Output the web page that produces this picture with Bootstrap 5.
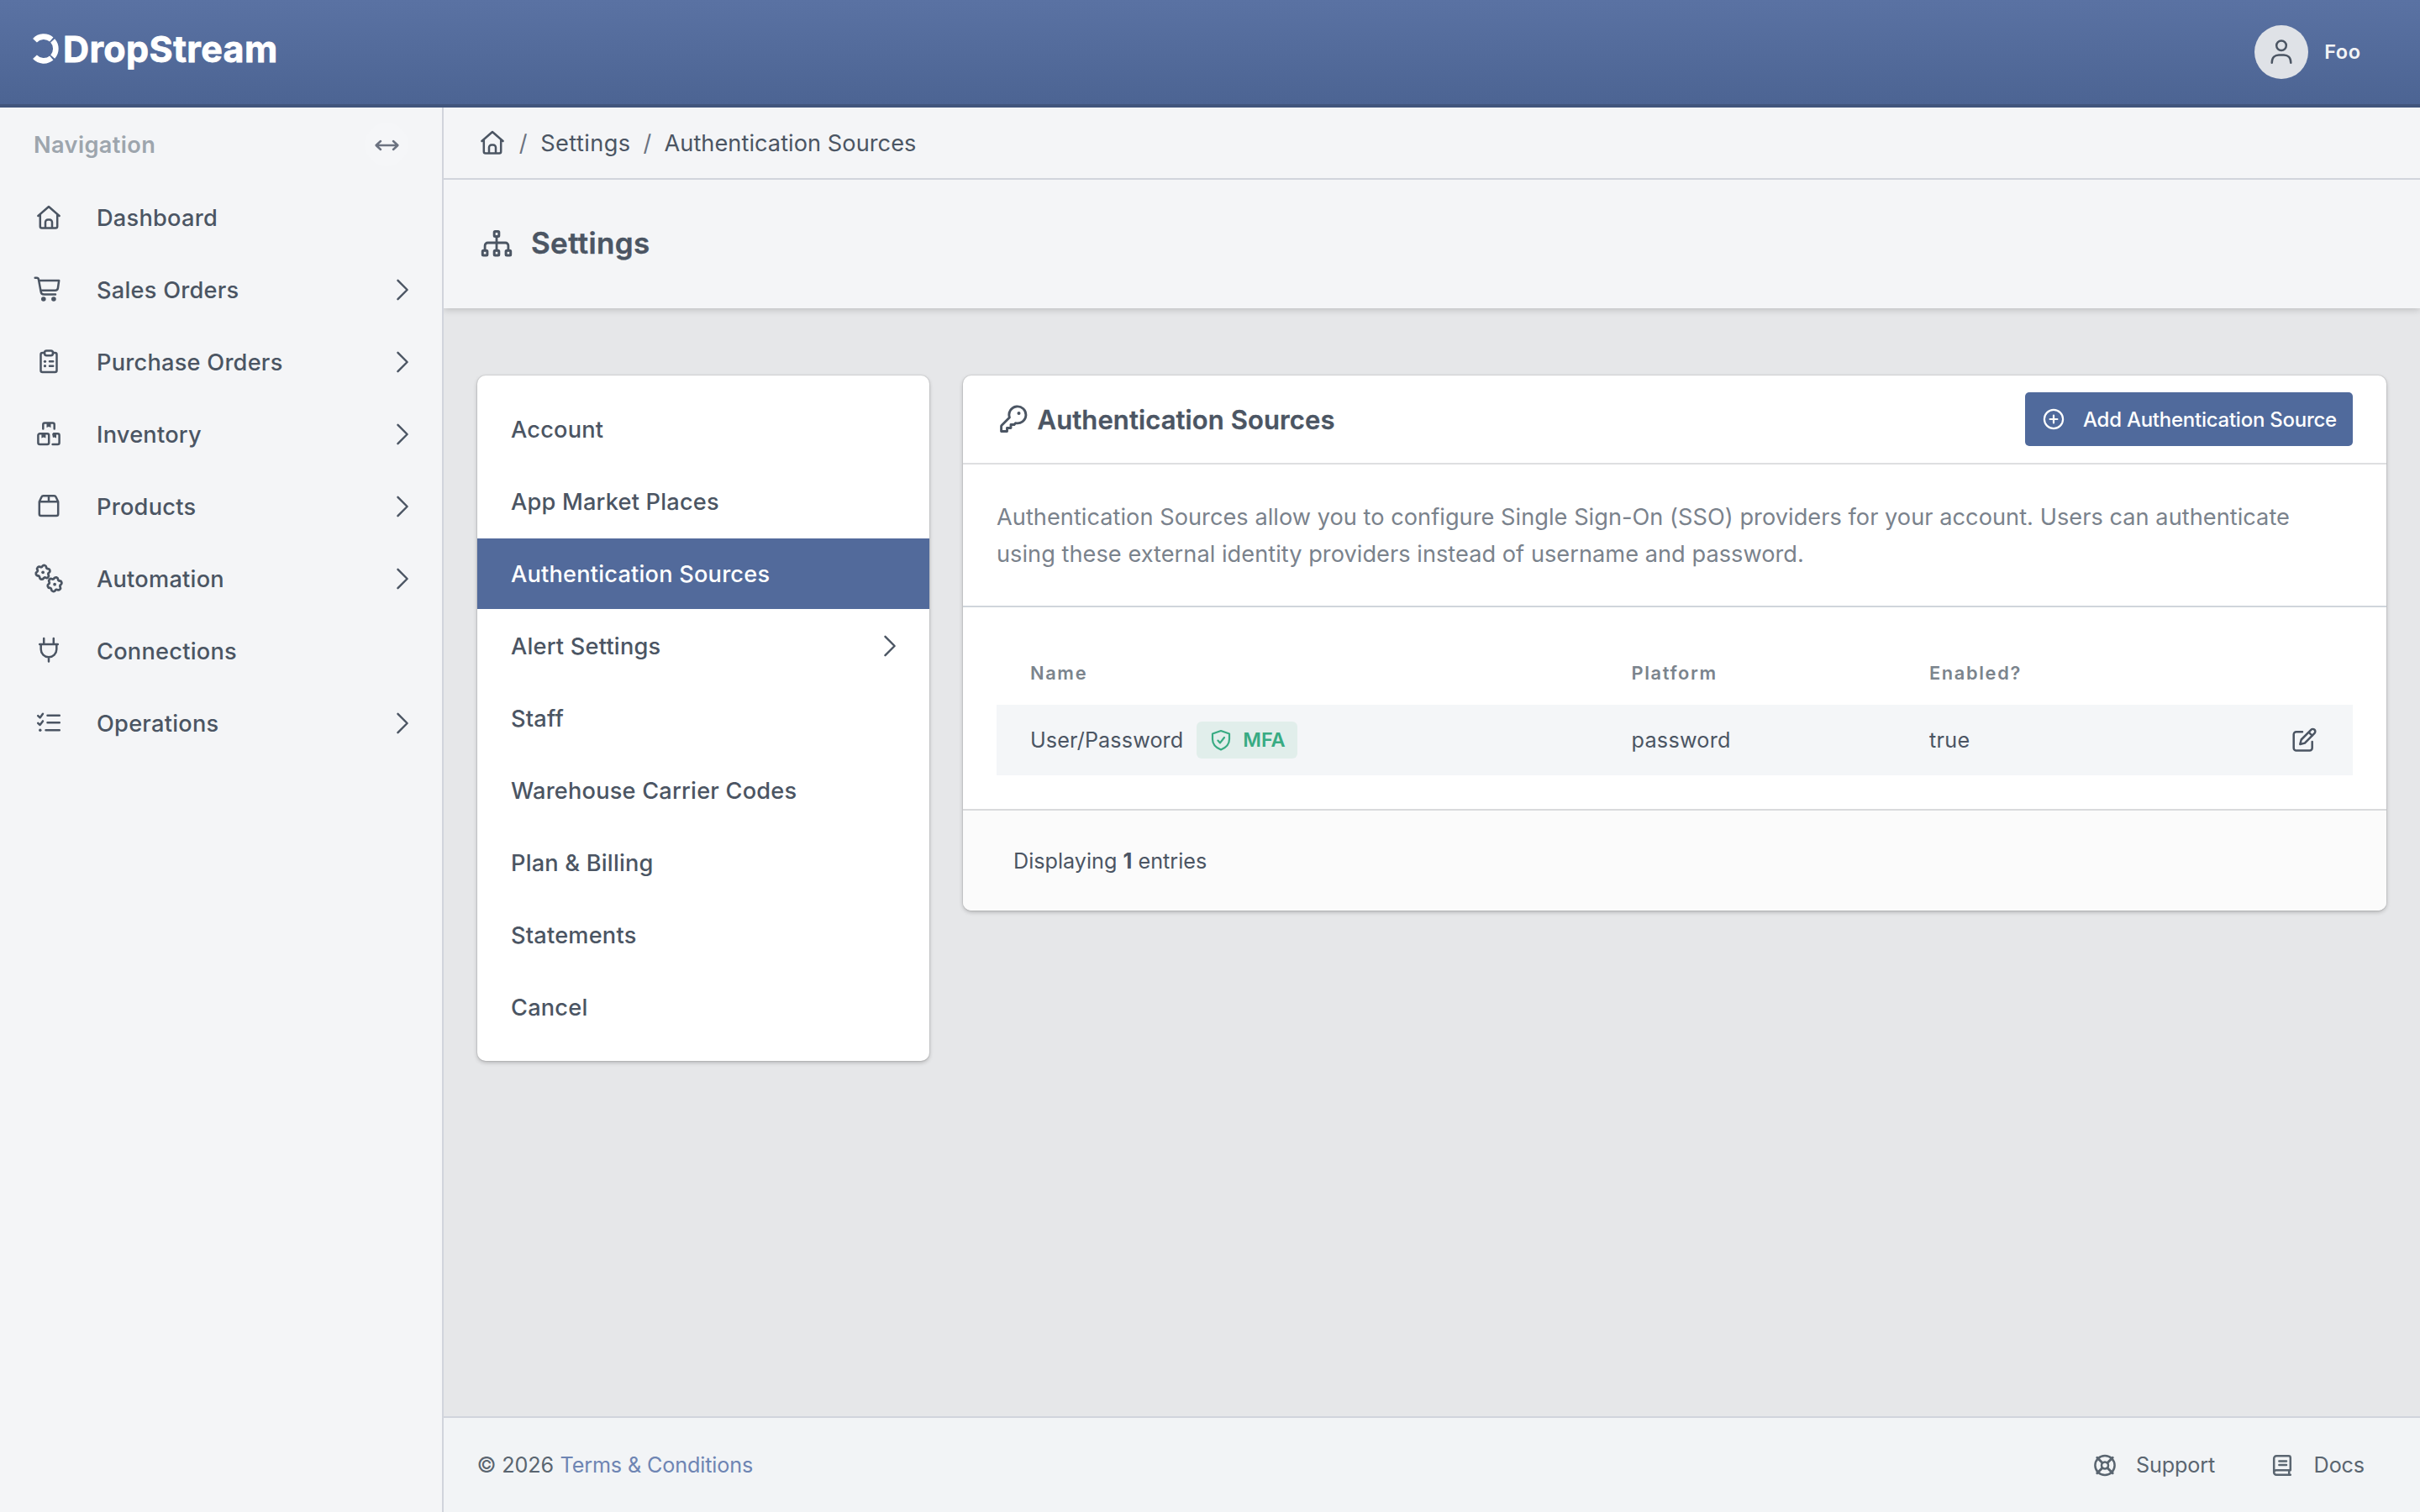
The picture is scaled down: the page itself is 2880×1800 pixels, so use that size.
<!DOCTYPE html>
<html lang="en">
<head>
<meta charset="utf-8">
<meta name="viewport" content="width=device-width, initial-scale=1">
<title>Authentication Sources - DropStream</title>
<link href="https://cdn.jsdelivr.net/npm/bootstrap@5.3.0/dist/css/bootstrap.min.css" rel="stylesheet">
<style>
  :root { --ink:#4b5563; --brand:#526a9b; --line:#d1d4dc; --pane:#f4f5f7; }
  body { font-family:Inter,"Noto Sans",sans-serif; font-size:27.2px; line-height:44px; color:var(--ink); background:#e6e7e9; height:1800px; overflow:hidden; }
  a { color:inherit; text-decoration:none; }
  .ico { width:40px; height:40px; flex:none; fill:none; stroke:currentColor; stroke-width:2.5; stroke-linecap:round; stroke-linejoin:round; display:block; overflow:visible; }
  .ico .solid { fill:currentColor; stroke:none; }
  .topbar { height:128px; border-bottom:4px solid #41557c; background:linear-gradient(#5a72a3,#4c6493); padding:0 69px 0 33px; }
  .brand { color:#fff; font-weight:700; font-size:43px; letter-spacing:.4px; line-height:50px; margin-top:-8px; }
  .brand span { -webkit-text-stroke:.8px #fff; }
  .brand .ico { stroke-width:6.6; stroke-linecap:butt; margin-right:2px; }
  .avatar { width:64px; height:64px; background:#dfe2e7; color:#4b5563; margin-right:19px; }
  .uname { color:#f3f4f6; font-size:23.5px; font-weight:600; letter-spacing:.55px; margin-right:1.5px; }
  .sidebar { width:528px; border-right:2px solid var(--line); background:var(--pane); flex:none; }
  .side-head { height:88px; padding:0 40px; color:#9da5ad; font-weight:600; letter-spacing:.38px; }
  .toggle-btn { width:52px; height:52px; background:#f5f6f8; color:#6b7280; }
  .side-link { height:86px; padding:0 40px 0 37.5px; font-weight:500; letter-spacing:.24px; }
  .side-link .lbl { margin-left:37.5px; }
  .side-head > span:first-child, .side-link .lbl, .crumbs a, .crumbs span { padding-top:2px; }
  .chev { width:14px; stroke-width:2.4; margin-left:auto; }
  .crumbs { height:86px; border-bottom:2px solid var(--line); background:var(--pane); padding-left:37.7px; letter-spacing:.04px; }
  .crumbs .sep { width:20px; text-align:center; color:#6b7280; }
  .page-head { height:153px; background:var(--pane); padding-left:43px; font-size:35px; font-weight:600; letter-spacing:.35px; box-shadow:0 2px 8px rgba(0,0,0,.18); z-index:1; clip-path:inset(0 0 -20px 0); }
  .page-head span { margin-left:21px; padding-bottom:3px; -webkit-text-stroke:.4px currentColor; }
  .pane-card { background:#fff; border:0; border-radius:10px; overflow:hidden; box-shadow:0 0 0 1px rgba(0,0,0,.06),0 2px 5px rgba(0,0,0,.23); }
  .work { padding:80px 40px 0; gap:40px; }
  .menu-card { width:538px; padding:22px 0; gap:2px; flex:none; }
  .menu-card a { height:84px; padding:2px 40px 0; font-weight:500; letter-spacing:.2px; }
  .menu-card .chev { margin-top:-2px; }
  .menu-card a.active { background:var(--brand); color:#fff; }
  .src-head { height:106px; border-bottom:2px solid #dedfe1; padding:0 40px; }
  .src-head h2 { font-size:31px; font-weight:600; letter-spacing:.1px; margin:0 0 0 8.5px; padding-top:1px; -webkit-text-stroke:.3px currentColor; }
  .btn-add { width:390px; height:64px; background:#506a9c; color:#fff; border:0; border-radius:5px; font-size:24px; font-weight:500; letter-spacing:-.25px; padding:0 0 0 14px; white-space:nowrap; }
  .btn-add .ico { stroke-width:2.2; margin-right:15px; }
  .btn-add span { padding-top:1px; }
  .desc { padding:41px 40px 39px; height:170px; border-bottom:2px solid #d0d5db; color:#7a828c; letter-spacing:.028px; }
  .src-table { width:1614px; margin:40px; table-layout:fixed; font-size:25.2px; letter-spacing:.26px; --bs-table-bg:transparent; color:var(--ink); }
  .src-table > :not(caption) > * > * { padding:0 0 0 40px; border:0; vertical-align:middle; color:inherit; }
  .src-table thead th { height:76px; font-size:21.8px; font-weight:600; letter-spacing:1.65px; color:#7b848d; }
  .src-table tbody tr { height:84px; background:#f4f6f8; }
  .uname-cell { letter-spacing:.1px; }
  .mfa { height:44px; width:120px; border-radius:6px; background:#e1eeeb; color:#38ab83; font-size:23.5px; font-weight:600; letter-spacing:-.1px; margin-left:16px; padding-left:9px; }
  .mfa .ico { stroke-width:2.2; margin-right:6px; }
  .card-foot { height:121px; border-top:2px solid #d9dadc; background:#fbfbfb; padding-left:60px; font-size:25.2px; white-space:pre; }
  .site-foot { height:114px; border-top:2px solid var(--line); background:#f2f4f6; padding:0 66px 0 39.5px; font-size:25.2px; color:#5a6570; letter-spacing:-.14px; }
  .site-foot .terms { color:#6e85b3; margin-left:7.5px; }
</style>
</head>
<body class="d-flex flex-column">
<svg width="0" height="0" class="position-absolute" aria-hidden="true">
  <symbol id="home" viewBox="-20 -20 40 40"><path d="M-12.6-2L0-13 12.6-2M-10.2-3.5V10.5a2 2 0 0 0 2 2H8.2a2 2 0 0 0 2-2V-3.5M-4 12.5V5.5a3 3 0 0 1 3-3H1a3 3 0 0 1 3 3v7"/></symbol>
  <symbol id="chevron" viewBox="0 -20 14 40"><path d="M1.5-11.2L12.6 0 1.5 11.2"/></symbol>
  <symbol id="cog" viewBox="-10 -10 20 20" overflow="visible"><path d="M-.58-6.57A2.3 2.3 0 0 1 3.59-5.54A1.6 1.6 0 0 0 5.41-3.79A2.3 2.3 0 0 1 6.59.35A1.6 1.6 0 0 0 5.98 2.79A2.3 2.3 0 0 1 3 5.88A1.6 1.6 0 0 0 .58 6.57A2.3 2.3 0 0 1-3.59 5.54A1.6 1.6 0 0 0-5.41 3.79A2.3 2.3 0 0 1-6.59-.35A1.6 1.6 0 0 0-5.98-2.79A2.3 2.3 0 0 1-3-5.88A1.6 1.6 0 0 0-.58-6.57Z"/><circle r="1.7" fill="currentColor" stroke="none"/></symbol>
</svg>

<header class="topbar d-flex align-items-center justify-content-between flex-shrink-0">
  <a href="#" class="brand d-flex align-items-center">
    <svg class="ico" viewBox="-19 -20 40 40"><path d="M-10.5-9.8A14.4 14.4 0 0 1 9.3-11M10.7-9.6A14.4 14.4 0 0 1 10.7 9.6M9.3 11A14.4 14.4 0 0 1-10.5 9.8"/></svg>
    <span>DropStream</span>
  </a>
  <a href="#" class="d-flex align-items-center">
    <span class="avatar rounded-circle d-flex align-items-center justify-content-center"><svg class="ico" viewBox="-20 -20 40 40"><circle cy="-7.7" r="5.8"/><path d="M-11.3 12.8C-11.3 6.5-7.5 3.4-3 3.4H3C7.5 3.4 11.3 6.5 11.3 12.8"/></svg></span>
    <span class="uname">Foo</span>
  </a>
</header>

<div class="d-flex flex-grow-1">
  <nav class="sidebar">
    <div class="side-head d-flex align-items-center justify-content-between">
      <span>Navigation</span>
      <span class="toggle-btn rounded-circle d-flex align-items-center justify-content-center"><svg class="ico" viewBox="-20 -20 40 40"><path d="M-12 1H13M-7-4L-12.4 1-7 6M8-4L13.4 1 8 6"/></svg></span>
    </div>
    <a href="#" class="side-link d-flex align-items-center"><svg class="ico"><use href="#home"/></svg><span class="lbl">Dashboard</span></a>
    <a href="#" class="side-link d-flex align-items-center"><svg class="ico" viewBox="-20 -20 40 40"><path d="M-16.3-14.2h2a2.2 2.2 0 0 1 2.2 1.8L-9.3 2.4a3.6 3.6 0 0 0 3.5 3H8M-11.8-11H12.2L10.9-2a3.2 3.2 0 0 1-3.2 2.7H-9.7"/><circle class="solid" cx="-6.2" cy="11" r="2.8"/><circle class="solid" cx="5.9" cy="11" r="2.8"/></svg><span class="lbl">Sales Orders</span><svg class="ico chev"><use href="#chevron"/></svg></a>
    <a href="#" class="side-link d-flex align-items-center"><svg class="ico" viewBox="-20 -20 40 40"><path d="M-5-11H-7.5a2 2 0 0 0-2 2V10a2 2 0 0 0 2 2h15a2 2 0 0 0 2-2V-9a2 2 0 0 0-2-2H5"/><rect x="-5" y="-13.4" width="10" height="5.6" rx="2.4"/><path d="M1-.7H5.2M1 4.7H5.2"/><circle class="solid" cx="-4.5" cy="-.7" r="1.6"/><circle class="solid" cx="-4.5" cy="4.7" r="1.6"/></svg><span class="lbl">Purchase Orders</span><svg class="ico chev"><use href="#chevron"/></svg></a>
    <a href="#" class="side-link d-flex align-items-center"><svg class="ico" viewBox="-20 -20 40 40"><path d="M-6.7-6.5V-11.5a2 2 0 0 1 2-2H4.7a2 2 0 0 1 2 2v5"/><rect x="-12.6" y="-.8" width="12.8" height="12.9" rx="2"/><path d="M6-.8H10.6a2 2 0 0 1 2 2V10.1a2 2 0 0 1-2 2H4.6"/><path class="solid" d="M-2.5-13h5v5l-2.5-1-2.5 1zM-8.6-.5h5v5l-2.5-1-2.5 1zM4-.8h5v5.3L6.5 3.5 5 4z"/></svg><span class="lbl">Inventory</span><svg class="ico chev"><use href="#chevron"/></svg></a>
    <a href="#" class="side-link d-flex align-items-center"><svg class="ico" viewBox="-20 -20 40 40"><path d="M-11.2-5.7V9a2 2 0 0 0 2 2H9.2a2 2 0 0 0 2-2V-5.7L8.6-11.3a2.4 2.4 0 0 0-2.2-1.4H-6.4a2.4 2.4 0 0 0-2.2 1.4ZM-11.2-5.7H11.2M0-12.7V-5.7"/></svg><span class="lbl">Products</span><svg class="ico chev"><use href="#chevron"/></svg></a>
    <a href="#" class="side-link d-flex align-items-center"><svg class="ico" viewBox="-20 -20 40 40"><use href="#cog" x="-18" y="-18.8" width="22.2" height="22.2"/><use href="#cog" x="-4" y="-4.4" width="22.2" height="22.2"/></svg><span class="lbl">Automation</span><svg class="ico chev"><use href="#chevron"/></svg></a>
    <a href="#" class="side-link d-flex align-items-center"><svg class="ico" viewBox="-20 -20 40 40"><path d="M-5.8-15V-8M5.8-15V-8M-10.8-8H10.8M-9.3-8V-2A9.3 9.3 0 0 0 9.3-2V-8M0 7.4V12.4"/></svg><span class="lbl">Connections</span></a>
    <a href="#" class="side-link d-flex align-items-center"><svg class="ico" viewBox="-20 -20 40 40"><path d="M-1.5-9.3H12.8M-1.5-.7H12.8M-3.5 8.3H12.8M-12.8-8.8l2.4 2.2 3.4-4.6M-12.8-.2l2.4 2.2 3.4-4.6"/><circle class="solid" cx="-10.2" cy="8.3" r="1.7"/></svg><span class="lbl">Operations</span><svg class="ico chev"><use href="#chevron"/></svg></a>
  </nav>

  <main class="d-flex flex-column flex-grow-1">
    <div class="crumbs d-flex align-items-center flex-shrink-0">
      <svg class="ico"><use href="#home"/></svg>
      <span class="sep" style="margin-left:7px">/</span><a href="#" style="margin:0 10px 0 10.5px;letter-spacing:.4px">Settings</a><span class="sep">/</span><span style="margin-left:10px">Authentication Sources</span>
    </div>
    <div class="page-head d-flex align-items-center flex-shrink-0 position-relative">
      <svg class="ico" viewBox="-20 -19 40 40"><g stroke-width="3"><rect x="-2.8" y="-14.6" width="5.6" height="6" rx="1"/><rect x="-16.7" y="8.3" width="5.6" height="5.8" rx="1"/><rect x="-2.8" y="8.3" width="5.6" height="5.8" rx="1"/><rect x="11.1" y="8.3" width="5.6" height="5.8" rx="1"/></g><path d="M0-8V8M-13.9 8V2.4A3.4 3.4 0 0 1-10.5-1H10.5A3.4 3.4 0 0 1 13.9 2.4V8" stroke-width="2.8"/></svg>
      <span>Settings</span>
    </div>

    <div class="work d-flex align-items-start flex-grow-1">
      <div class="pane-card menu-card d-flex flex-column">
        <a href="#" class="d-flex align-items-center">Account</a>
        <a href="#" class="d-flex align-items-center">App Market Places</a>
        <a href="#" class="d-flex align-items-center active">Authentication Sources</a>
        <a href="#" class="d-flex align-items-center">Alert Settings<svg class="ico chev"><use href="#chevron"/></svg></a>
        <a href="#" class="d-flex align-items-center">Staff</a>
        <a href="#" class="d-flex align-items-center">Warehouse Carrier Codes</a>
        <a href="#" class="d-flex align-items-center">Plan &amp; Billing</a>
        <a href="#" class="d-flex align-items-center">Statements</a>
        <a href="#" class="d-flex align-items-center">Cancel</a>
      </div>

      <section class="pane-card card flex-grow-1">
        <div class="src-head d-flex align-items-center">
          <svg class="ico" viewBox="-20 -20 40 40"><g stroke-width="2.9"><path d="M-4.6-2A10 10 0 1 1 2.6 4.6L1 6.5H-3V10.5H-7.5V14.5H-14.4V8.6a2 2 0 0 1 .6-1.4Z"/></g><circle class="solid" cx="6.5" cy="-7" r="2"/></svg>
          <h2>Authentication Sources</h2>
          <button type="button" class="btn btn-add d-flex align-items-center ms-auto"><svg class="ico" viewBox="-20 -20 40 40"><circle r="11.1"/><path d="M-4.4 0H4.4M0-4.4V4.4"/></svg><span>Add Authentication Source</span></button>
        </div>
        <div class="desc">Authentication Sources allow you to configure Single Sign-On (SSO) providers for your account. Users can authenticate<br>using these external identity providers instead of username and password.</div>
        <table class="table src-table">
          <colgroup><col style="width:715.5px"><col style="width:354.5px"><col style="width:300px"><col></colgroup>
          <thead><tr><th>Name</th><th>Platform</th><th>Enabled?</th><th></th></tr></thead>
          <tbody><tr>
            <td><div class="uname-cell d-flex align-items-center">User/Password<span class="mfa d-flex align-items-center"><svg class="ico" viewBox="-20 -20 40 40"><path d="M0-11L10-7.5V-1C10 5.5 5 9.5 0 11.5C-5 9.5-10 5.5-10-1V-7.5ZM-3.6.6L-1 3.4 4-3"/></svg>MFA</span></div></td>
            <td>password</td>
            <td>true</td>
            <td><div class="d-flex justify-content-end pe-4"><svg class="ico" viewBox="-6 -20 40 40"><path d="M-2.5-9.8H-9.8a3 3 0 0 0-3 3V9.6a3 3 0 0 0 3 3H6.2a3 3 0 0 0 3-3V2M-5.2 5L-3.8-.5 7.8-12.2a2.9 2.9 0 0 1 4.2 4.1L.4 3.6ZM5-9.4L9.3-5.2" transform="translate(.5 0)"/></svg></div></td>
          </tr></tbody>
        </table>
        <div class="card-foot d-flex align-items-center"><span>Displaying <b>1</b> entries</span></div>
      </section>
    </div>

    <footer class="site-foot d-flex align-items-center flex-shrink-0">
      <span>© 2026</span><a href="#" class="terms">Terms &amp; Conditions</a>
      <a href="#" class="d-flex align-items-center ms-auto"><svg class="ico" viewBox="-20 -20.5 40 40"><circle r="11.6"/><circle r="4"/><path d="M-9.2-9.2L-3-3M9.2-9.2L3-3M-9.2 9.2L-3 3M9.2 9.2L3 3" stroke-width="3"/></svg><span style="margin-left:17px">Support</span></a>
      <a href="#" class="d-flex align-items-center" style="margin-left:60px"><svg class="ico" viewBox="-20 -20.5 40 40"><path d="M9.8 5.8V-9.1a2.2 2.2 0 0 0-2.2-2.2H-6.8a3 3 0 0 0-3 3V8.5a2.8 2.8 0 0 0 2.8 2.8H9.8M-9.8 8.5A2.8 2.8 0 0 1-7 5.8H9.8M8.2 5.8V11.3M-3.6-5H5M-3.6-.5H5"/></svg><span style="margin-left:17.5px">Docs</span></a>
    </footer>
  </main>
</div>
<script src="https://cdn.jsdelivr.net/npm/bootstrap@5.3.0/dist/js/bootstrap.bundle.min.js"></script>
</body>
</html>
